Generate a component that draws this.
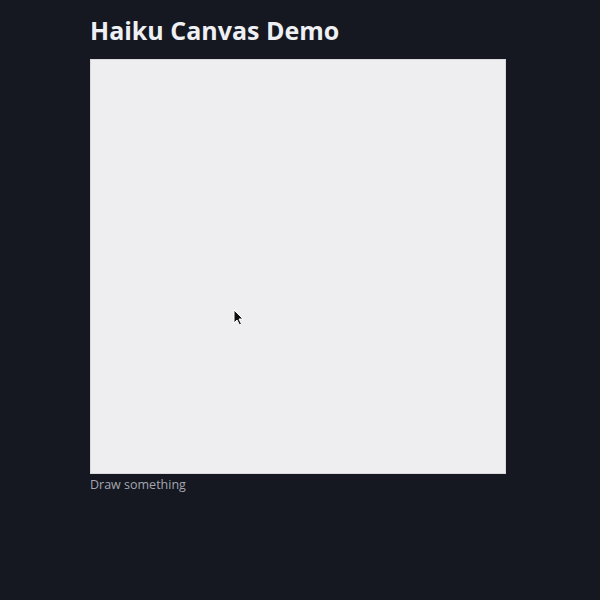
export default function App() {
  return (
    <main className="min-h-screen bg-[#151820] px-[90px] pt-[14px] font-['Open_Sans',sans-serif]">
      <h1 className="text-[25px] font-bold leading-[32px] text-[#eef0f4]">Haiku Canvas Demo</h1>
      <div className="relative mt-[13px] h-[415px] w-[416px] border border-[#d9d9de] bg-[#eeedef]">
        <svg
          className="absolute left-[142px] top-[249px]"
          width="12"
          height="18"
          viewBox="0 0 12 18"
        >
          <path d="M1 1 L1 14 L4 11 L6.5 16 L8.5 15 L6 10 L10 10 Z" fill="#111" stroke="#fff" strokeWidth="1" />
        </svg>
      </div>
      <p className="mt-[2px] text-[12.5px] leading-[18px] text-[#a3a7b0]">Draw something</p>
    </main>
  );
}
